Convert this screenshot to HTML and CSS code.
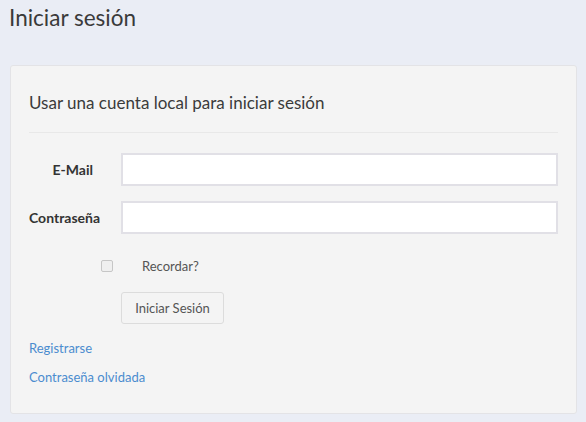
FILE: index.html
```html
<!DOCTYPE html>
<html lang="es">
<head>
<meta charset="utf-8">
<link rel="stylesheet" href="styles.css">
</head>
<body>
<h2 class="page-title">Iniciar sesión</h2>
<section class="card">
  <h4 class="card-title">Usar una cuenta local para iniciar sesión</h4>
  <hr class="divider">
  <form class="form">
    <div class="row">
      <label class="label" for="email">E-Mail</label>
      <input class="input" id="email" type="text">
    </div>
    <div class="row">
      <label class="label" for="pw">Contraseña</label>
      <input class="input" id="pw" type="password">
    </div>
    <div class="check-row">
      <span class="checkbox"></span>
      <span class="check-label">Recordar?</span>
    </div>
    <div class="btn-row">
      <button class="btn" type="button">Iniciar Sesión</button>
    </div>
  </form>
  <p class="link-p"><a class="link" href="#">Registrarse</a></p>
  <p class="link-p"><a class="link" href="#">Contraseña olvidada</a></p>
</section>
</body>
</html>
```
FILE: styles.css
```css
html, body {
  margin: 0;
  padding: 0;
}
body {
  background: #eaedf5;
  font-family: Lato, "Open Sans", sans-serif;
  color: #333;
  width: 586px;
  height: 422px;
  overflow: hidden;
}
.page-title {
  margin: 0;
  padding: 6px 0 0 9px;
  font-size: 22.5px;
  font-weight: 400;
  line-height: 24px;
  color: #3a3a3a;
}
.card {
  margin: 35px 9px 0 10px;
  background: #f4f4f4;
  border: 1px solid #e3e3e6;
  border-radius: 3px;
  padding: 0 18px 20px 18px;
  height: 349px;
  box-sizing: border-box;
}
.card-title {
  margin: 27px 0 0 0;
  font-size: 17px;
  font-weight: 400;
  line-height: 20px;
  color: #3b3b3b;
}
.divider {
  border: 0;
  border-top: 1px solid #e8e8e8;
  margin: 19px 0 20px 0;
}
.form {
  display: flex;
  flex-direction: column;
}
.row {
  display: flex;
  align-items: center;
  margin-bottom: 15px;
}
.label {
  width: 64px;
  flex: none;
  text-align: right;
  white-space: nowrap;
  font-size: 14px;
  font-weight: 700;
  color: #333;
  margin-right: 28px;
}
.input {
  flex: 1;
  height: 33px;
  box-sizing: border-box;
  border: 2px solid #e1e0e6;
  background: #fff;
  margin: 0;
}
.check-row {
  display: flex;
  align-items: center;
  height: 20px;
  margin-top: 7px;
}
.checkbox {
  width: 10px;
  height: 10px;
  border: 1px solid #c6c6c6;
  border-radius: 2px;
  background: #efefef;
  margin-left: 72px;
}
.check-label {
  font-size: 13px;
  color: #555;
  margin-left: 29px;
}
.btn-row {
  padding-left: 92px;
  margin-top: 16px;
}
.btn {
  height: 32px;
  width: 103px;
  border: 1px solid #dcdcdc;
  border-radius: 3px;
  background: #f4f4f4;
  font-family: inherit;
  font-size: 13px;
  color: #555;
  padding: 0;
}
.link-p {
  margin: 15px 0 0 0;
  font-size: 13px;
  line-height: 18px;
}
.link-p + .link-p {
  margin-top: 11px;
}
.link {
  color: #4b8ccf;
  text-decoration: none;
}
```
